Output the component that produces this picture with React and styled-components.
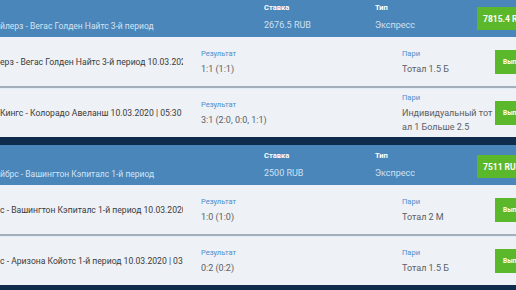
import React from "react";
import styled, { createGlobalStyle } from "styled-components";

const GlobalStyle = createGlobalStyle`
  html, body {
    margin: 0;
    padding: 0;
    background: #0f2c4c;
    overflow: hidden;
  }
  body {
    font-family: Roboto, "Liberation Sans", Arial, sans-serif;
  }
`;

const bets = [
  {
    title: "йлерз - Вегас Голден Найтс 3-й период",
    stake: "2676.5 RUB",
    type: "Экспресс",
    win: "7815.4 RUB",
    events: [
      {
        match: "ерз - Вегас Голден Найтс 3-й период 10.03.2020 | 04:00",
        result: "1:1 (1:1)",
        pick: "Тотал 1.5 Б",
      },
      {
        match: "Кингс - Колорадо Авеланш 10.03.2020 | 05:30",
        result: "3:1 (2:0, 0:0, 1:1)",
        pick: "Индивидуальный тотал 1 Больше 2.5",
      },
    ],
  },
  {
    title: "йбрс - Вашингтон Кэпиталс 1-й период",
    stake: "2500 RUB",
    type: "Экспресс",
    win: "7511 RUB",
    events: [
      {
        match: "с - Вашингтон Кэпиталс 1-й период 10.03.2020 | 02:00",
        result: "1:0 (1:0)",
        pick: "Тотал 2 М",
      },
      {
        match: "с - Аризона Койотс 1-й период 10.03.2020 | 03:00",
        result: "0:2 (0:2)",
        pick: "Тотал 1.5 Б",
      },
    ],
  },
];

const List = styled.div`
  display: flex;
  flex-direction: column;
  gap: 8px;
  margin-top: -3px;
  width: 516px;
  overflow: hidden;
`;

const Card = styled.div`
  display: flex;
  flex-direction: column;
`;

const Header = styled.div`
  display: grid;
  grid-template-columns: 264px 111px 102px 60px;
  align-items: start;
  height: 40px;
  box-sizing: border-box;
  padding-top: 5px;
  background: #4a86ba;
`;

const Title = styled.div`
  padding-top: 17px;
  font-size: 8.5px;
  line-height: 14px;
  color: #d3e4f4;
  white-space: nowrap;
  overflow: hidden;
`;

const HeadLabel = styled.div`
  font-size: 7.5px;
  line-height: 12px;
  font-weight: 700;
  color: #ffffff;
`;

const HeadValue = styled.div`
  margin-top: 4px;
  font-size: 9px;
  line-height: 14px;
  color: #cfe1f2;
  white-space: nowrap;
`;

const WinButton = styled.div`
  margin-top: 5px;
  height: 23px;
  padding-left: 6px;
  display: flex;
  align-items: center;
  background: #5bb82a;
  color: #ffffff;
  font-size: 8.5px;
  font-weight: 700;
  white-space: nowrap;
  overflow: hidden;
`;

const Row = styled.div`
  display: grid;
  grid-template-columns: 201px 201px 93px 40px;
  align-items: center;
  height: 49px;
  background: #eef1f5;
  border-top: ${(p) => (p.$first ? "none" : "2px solid #a3afba")};
  box-shadow: ${(p) => (p.$first ? "none" : "inset 0 1px 0 #e3edf8")};
`;

const Match = styled.div`
  width: 183px;
  font-size: 8.6px;
  line-height: 14px;
  color: #3b3b3b;
  white-space: nowrap;
  overflow: hidden;
`;

const Cell = styled.div`
  display: flex;
  flex-direction: column;
  width: 91px;
`;

const Label = styled.div`
  font-size: 7.5px;
  line-height: 12px;
  color: #4a8fcd;
  margin-bottom: 2px;
`;

const Value = styled.div`
  font-size: 9px;
  line-height: 14px;
  color: #5a6066;
  white-space: ${(p) => (p.$wrap ? "normal" : "nowrap")};
  word-break: break-all;
`;

const PayButton = styled.div`
  height: 24px;
  padding-left: 8px;
  display: flex;
  align-items: center;
  background: #5bb82a;
  color: #ffffff;
  font-size: 6.5px;
  font-weight: 700;
  white-space: nowrap;
  overflow: hidden;
`;

const Bet = ({ bet }) => (
  <Card>
    <Header>
      <Title>{bet.title}</Title>
      <div>
        <HeadLabel>Ставка</HeadLabel>
        <HeadValue>{bet.stake}</HeadValue>
      </div>
      <div>
        <HeadLabel>Тип</HeadLabel>
        <HeadValue>{bet.type}</HeadValue>
      </div>
      <WinButton>{bet.win}</WinButton>
    </Header>
    {bet.events.map((ev, i) => (
      <Row key={i} $first={i === 0}>
        <Match>{ev.match}</Match>
        <Cell>
          <Label>Результат</Label>
          <Value>{ev.result}</Value>
        </Cell>
        <Cell>
          <Label>Пари</Label>
          <Value $wrap>{ev.pick}</Value>
        </Cell>
        <PayButton>Выплата</PayButton>
      </Row>
    ))}
  </Card>
);

export default function App() {
  return (
    <>
      <GlobalStyle />
      <List>
        {bets.map((bet, i) => (
          <Bet key={i} bet={bet} />
        ))}
      </List>
    </>
  );
}
